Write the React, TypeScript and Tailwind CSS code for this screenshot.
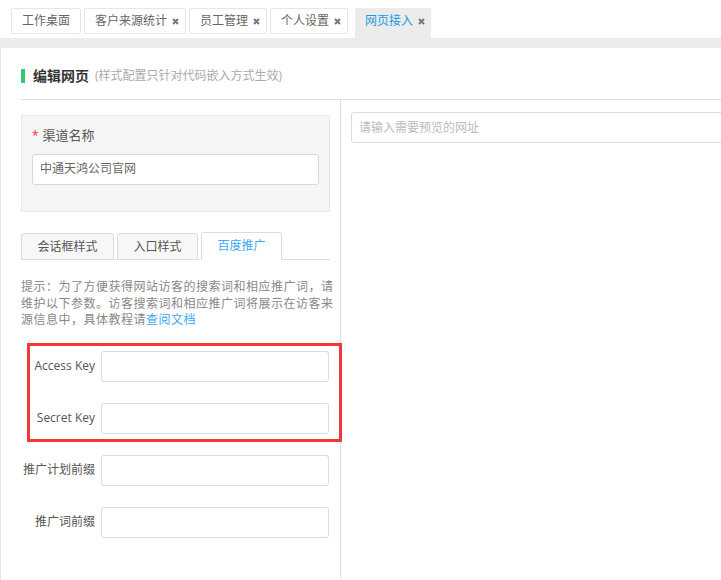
import React from "react";

const font = { fontFamily: '"Open Sans", "Noto Sans CJK SC", sans-serif' };

function CloseX() {
  return (
    <svg width="7" height="7" viewBox="0 0 7 7" className="ml-[5px] mt-[1px]">
      <path d="M1 1L6 6M6 1L1 6" stroke="#6f7888" strokeWidth="2" strokeLinecap="butt" />
    </svg>
  );
}

function TopTab({ label, closable, active }: { label: string; closable?: boolean; active?: boolean }) {
  return (
    <div
      className={
        active
          ? "flex h-[30px] items-center self-end bg-[#ececec] pl-[10px] pr-[6px] pb-[4px] text-[12px] text-[#1a9be0]"
          : closable
          ? "mb-[4px] flex h-[26px] items-center rounded-[2px] border border-[#e6e6e6] bg-white pl-[10px] pr-[6px] text-[12px] text-[#666]"
          : "mb-[4px] flex h-[26px] items-center rounded-[2px] border border-[#e6e6e6] bg-white px-[10px] text-[12px] text-[#666]"
      }
    >
      <span>{label}</span>
      {closable && <CloseX />}
    </div>
  );
}

function FormRow({ label }: { label: string }) {
  return (
    <div className="flex items-center">
      <div className="w-[94px] shrink-0 text-right text-[12px] text-[#555]">{label}</div>
      <div className="ml-[6px] h-[31px] w-[228px] shrink-0 rounded-[3px] border border-[#dcdcdc] bg-white" />
    </div>
  );
}

export default function App() {
  return (
    <div className="relative h-[580px] w-[721px] overflow-hidden bg-white" style={font}>
      {/* Top tabs */}
      <div className="flex h-[38px] items-end gap-[3px] pl-[11px]">
        <TopTab label="工作桌面" />
        <TopTab label="客户来源统计" closable />
        <TopTab label="员工管理" closable />
        <TopTab label="个人设置" closable />
        <div className="w-[1px]" />
        <TopTab label="网页接入" closable active />
      </div>
      <div className="h-[10px] bg-[#ececec]" />

      <div className="h-[532px] border-l border-[#e3e3e3]">
        {/* Header */}
        <div className="ml-[20px] flex h-[52px] items-center border-b border-[#e0e0e0] pt-[4px]">
          <div className="h-[14px] w-[4px] bg-[#2ecc71]" />
          <span className="ml-[8px] text-[14px] font-bold text-[#333]">编辑网页</span>
          <span className="ml-[6px] text-[12px] text-[#aaa]">(样式配置只针对代码嵌入方式生效)</span>
        </div>

        <div className="flex h-[479px]">
          {/* Left panel */}
          <div className="w-[339px] shrink-0 pt-[15px]">
            <div className="ml-[20px] h-[97px] w-[309px] border border-[#e8e8e8] bg-[#f5f5f5] px-[10px] pt-[10px]">
              <div className="flex items-center text-[13px] text-[#555]">
                <span className="mr-[4px] text-[12px] text-[#e33]">*</span>
                <span>渠道名称</span>
              </div>
              <div className="mt-[8px] flex h-[31px] w-[287px] items-center rounded-[3px] border border-[#d9d9d9] bg-white px-[7px] text-[12px] text-[#666]">
                中通天鸿公司官网
              </div>
            </div>

            {/* Sub tabs */}
            <div className="ml-[20px] mt-[20px] flex h-[28px] w-[309px] items-end gap-[3px] border-b border-[#dcdcdc]">
              <div className="-mb-px flex h-[27px] w-[93px] items-center justify-center rounded-t-[3px] border border-[#dcdcdc] bg-[#f7f7f7] text-[12px] text-[#555]">
                会话框样式
              </div>
              <div className="-mb-px flex h-[27px] w-[81px] items-center justify-center rounded-t-[3px] border border-[#dcdcdc] bg-[#f7f7f7] text-[12px] text-[#555]">
                入口样式
              </div>
              <div className="-mb-px flex h-[28px] w-[81px] items-center justify-center rounded-t-[3px] border border-b-white border-[#dcdcdc] bg-white text-[12px] text-[#3ea8f5]">
                百度推广
              </div>
            </div>

            <p className="ml-[20px] mt-[19px] whitespace-nowrap text-[12px] leading-[16.5px] tracking-[0.5px] text-[#888]">
              提示：为了方便获得网站访客的搜索词和相应推广词，请
              <br />
              维护以下参数。访客搜索词和相应推广词将展示在访客来
              <br />
              源信息中，具体教程请<span className="text-[#3ea8f5]">查阅文档</span>
            </p>

            <div className="mt-[22px] flex flex-col gap-[21px]">
              <FormRow label="Access Key" />
              <FormRow label="Secret Key" />
              <FormRow label="推广计划前缀" />
              <FormRow label="推广词前缀" />
            </div>
          </div>

          {/* Right panel */}
          <div className="flex-1 border-l border-[#e0e0e0] pl-[10px] pt-[12px]">
            <div className="flex h-[31px] w-[400px] items-center rounded-[3px] border border-[#dcdcdc] bg-white px-[7px] text-[12px] text-[#bbb]">
              请输入需要预览的网址
            </div>
          </div>
        </div>
      </div>

      {/* Red annotation box */}
      <div className="absolute left-[27px] top-[343px] h-[99px] w-[315px] border-[3px] border-[#f0393b]" />
    </div>
  );
}
